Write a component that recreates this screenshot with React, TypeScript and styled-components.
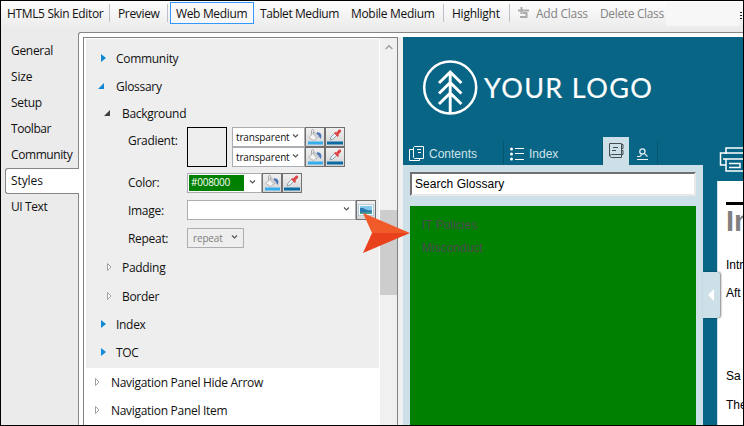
import React from 'react';
import styled, { createGlobalStyle } from 'styled-components';

const Global = createGlobalStyle`
  * { box-sizing: border-box; }
  body { margin: 0; overflow: hidden; }
  svg { display: block; flex: none; }
`;

const Frame = styled.div`
  position: relative;
  width: 744px;
  height: 426px;
  border: 1px solid #000;
  background: #ebebeb;
  overflow: hidden;
  display: flex;
  flex-direction: column;
  font-family: 'Open Sans', 'Noto Sans', sans-serif;
  font-size: 12px;
  color: #111;
  white-space: nowrap;
`;

const Toolbar = styled.div`
  height: 31px;
  flex: none;
  display: flex;
  align-items: flex-start;
  background: linear-gradient(#fdfdfd, #e9e9e9);
`;

const ToolItem = styled.div<{ $w: number; $pad?: number; $ls?: number; $active?: boolean; $disabled?: boolean }>`
  width: ${p => p.$w}px;
  height: 22px;
  margin-top: 1px;
  margin-left: ${p => (p.$active ? 2 : 0)}px;
  padding-left: ${p => p.$pad ?? 5}px;
  line-height: 21px;
  letter-spacing: ${p => p.$ls ?? -0.25}px;
  border: 1px solid ${p => (p.$active ? '#3399ff' : 'transparent')};
  background: ${p => (p.$active ? '#f8f8f8' : 'none')};
  color: ${p => (p.$disabled ? '#838383' : '#111')};
`;

const Divider = styled.div`
  width: 1px;
  height: 18px;
  margin-top: 3px;
  background: #bcc0c8;
`;

const ClassIcon = styled.div`
  width: 20px;
  padding: 6px 0 0 8px;
`;

const Cover = styled.div`
  width: 74px;
  height: 24px;
  margin-top: 1px;
  border-radius: 2px;
  background: #f7f7f7;
`;

const Overflow = styled.div`
  margin-top: 11px;
  width: 2px;
  height: 7px;
  display: flex;
  flex-direction: column;
  justify-content: space-between;
`;

const OverflowBar = styled.span`
  height: 1px;
  background: #222;
`;

const Main = styled.div`
  flex: 1;
  min-height: 0;
  display: flex;
`;

const SideTabs = styled.div`
  width: 77px;
  flex: none;
  padding: 6px 0 0 4px;
`;

const SideTab = styled.div<{ $active?: boolean; $ls?: number }>`
  height: 26px;
  width: ${p => (p.$active ? 74 : 73)}px;
  padding-left: 5px;
  line-height: 24px;
  letter-spacing: ${p => p.$ls ?? -0.25}px;
  border: 1px solid ${p => (p.$active ? '#868686' : 'transparent')};
  border-right: 0;
  border-radius: 3px 0 0 3px;
  background: ${p => (p.$active ? '#fff' : 'transparent')};
  position: relative;
`;

const Content = styled.div`
  flex: 1;
  min-width: 0;
  border-top: 1px solid #868686;
  border-left: 1px solid #868686;
  border-top-left-radius: 3px;
  background: #fff;
  padding: 4px 0 0 4px;
  display: flex;
`;

const Panel = styled.div`
  width: 315px;
  flex: none;
  border: 1px solid #7f8288;
  border-bottom: 0;
  padding-left: 2px;
  display: flex;
  background: #fff;
`;

const Tree = styled.div`
  width: 294px;
  margin-top: 1px;
`;

const GrayGroup = styled.div`
  height: 329px;
  padding-top: 5px;
  background: #eee;
`;

const Row = styled.div<{ $level: number; $h?: number; $ls?: number }>`
  height: ${p => p.$h ?? 28}px;
  padding-left: ${p => 8 + p.$level * 6}px;
  display: flex;
  align-items: center;
  letter-spacing: ${p => p.$ls ?? -0.3}px;
`;

const Marker = styled.span<{ $narrow: boolean }>`
  width: ${p => (p.$narrow ? 16 : 17)}px;
  flex: none;
  display: flex;
  padding-bottom: 1px;
`;

const Field = styled.div<{ $h?: number }>`
  height: ${p => p.$h ?? 28}px;
  padding-left: 42px;
  display: flex;
  align-items: center;
`;

const GradientField = styled(Field)`
  align-items: flex-start;
`;

const FieldLabel = styled.span<{ $top?: number }>`
  width: 59px;
  padding-top: ${p => p.$top ?? 0}px;
  letter-spacing: -0.3px;
`;

const Swatch = styled.div`
  width: 40px;
  height: 40px;
  border: 1px solid #000;
  margin-right: 5px;
`;

const Stack = styled.div`
  display: flex;
  flex-direction: column;
`;

const Line = styled.div`
  display: flex;
`;

const Combo = styled.div<{ $w: number; $disabled?: boolean }>`
  width: ${p => p.$w}px;
  height: 20px;
  border: 1px solid #abadb3;
  background: ${p => (p.$disabled ? '#eee' : '#fff')};
  color: ${p => (p.$disabled ? '#808080' : '#111')};
  font-size: 10px;
  letter-spacing: -0.15px;
  line-height: 17px;
  padding: 1px 5px 1px ${p => (p.$disabled ? 5 : 3)}px;
  display: flex;
  justify-content: space-between;
`;

const ColorValue = styled.span`
  width: 55px;
  height: 16px;
  line-height: 15px;
  margin-left: -2px;
  padding-left: 2px;
  background: #008000;
  color: #fff;
  letter-spacing: -0.25px;
`;

const IconButton = styled.div`
  width: 20px;
  height: 20px;
  border: 1px solid #707070;
  background: linear-gradient(#efefef, #d5d5d5);
  padding: 1px;
`;

const ScrollTrack = styled.div`
  width: 17px;
  background: #f0f0f0;
  margin-left: 1px;
  padding-top: 6px;
  display: flex;
  flex-direction: column;
  align-items: stretch;
`;

const ScrollUp = styled.div`
  height: 166px;
  padding-left: 5px;
`;

const ScrollThumb = styled.div`
  height: 85px;
  background: #cdcdcd;
`;

const Gutter = styled.div`
  width: 5px;
  flex: none;
  background: #f0f0f0;
`;

const Preview = styled.div`
  flex: 1;
  min-width: 0;
  background: #086585;
  display: flex;
  flex-direction: column;
  font-family: 'Liberation Sans', Arial, sans-serif;
`;

const Brand = styled.div`
  height: 99px;
  flex: none;
  padding: 22px 0 0 19px;
  display: flex;
`;

const BrandName = styled.div`
  margin-left: 6px;
  line-height: 57px;
  font-family: Lato, sans-serif;
  font-size: 27px;
  letter-spacing: 1.35px;
  color: #fff;
  -webkit-text-stroke: 0.2px #fff;
`;

const Columns = styled.div`
  flex: 1;
  min-height: 0;
  display: flex;
`;

const NavPane = styled.div`
  width: 300px;
  flex: none;
  display: flex;
  flex-direction: column;
`;

const NavTabs = styled.div`
  height: 29px;
  flex: none;
  display: flex;
  align-items: flex-end;
`;

const NavTab = styled.div<{ $w: number; $pad: number }>`
  width: ${p => p.$w}px;
  height: 24px;
  padding: 1px 0 0 ${p => p.$pad}px;
  display: flex;
  align-items: center;
  gap: 4px;
  color: #d3e3e9;
  border-right: 1px solid #07566f;
`;

const ActiveNavTab = styled.div`
  width: 26px;
  height: 28px;
  padding: 5px 0 0 6px;
  background: #cde0e7;
`;

const NavBody = styled.div`
  flex: 1;
  background: #cde0e7;
  padding: 7px 7px 0;
  display: flex;
  flex-direction: column;
`;

const Search = styled.div`
  height: 24px;
  flex: none;
  border: 2px solid #707070;
  border-right-color: #e8e8e8;
  border-bottom-color: #e8e8e8;
  background: #fff;
  padding-left: 3px;
  line-height: 20px;
  color: #000;
  letter-spacing: 0.04px;
`;

const Terms = styled.div`
  flex: 1;
  margin-top: 10px;
  padding: 8px 0 0 12px;
  background: #008000;
  color: #4d4a52;
  line-height: 23px;
`;

const Topic = styled.div`
  flex: 1;
  min-width: 0;
  padding-left: 14px;
  display: flex;
  flex-direction: column;
`;

const PrintBar = styled.div`
  height: 45px;
  flex: none;
  padding: 11px 0 0 2px;
`;

const Page = styled.div`
  flex: 1;
  background: #fff;
  border-left: 1px solid #cde0e7;
  padding: 21px 0 0 8px;
  overflow: hidden;
  color: #000;
`;

const Heading = styled.div`
  border-top: 3px solid #000;
  height: 49px;
  line-height: 33px;
  font-size: 29px;
  font-weight: bold;
  color: #808080;
`;

const Para = styled.div<{ $h: number }>`
  height: ${p => p.$h}px;
  line-height: 29px;
`;

const Handle = styled.div`
  position: absolute;
  left: 702px;
  top: 271px;
  width: 17px;
  height: 46px;
  padding: 17px 0 0 5px;
  background: #cde0e7;
  border-radius: 0 3px 3px 0;
  box-shadow: 1px 0 2px rgba(0, 0, 0, 0.5);
`;

const Pointer = styled.div`
  position: absolute;
  left: 361px;
  top: 211px;
`;

type Kind = 'blue' | 'gray' | 'blueOpen' | 'grayOpen';

const Triangle = ({ kind, narrow = true }: { kind: Kind; narrow?: boolean }) => (
  <Marker $narrow={narrow}>
    <svg width="8" height="10" viewBox="0 0 8 10" overflow="visible">
      {kind === 'blue' && <path d="M1 1L6 5L1 9Z" fill="#1088d4" />}
      {kind === 'gray' && <path d="M1.5 1.5L5 5L1.5 8.5Z" fill="#fff" stroke="#a0a0a0" />}
      {kind === 'blueOpen' && <path d="M-2 8H4V2Z" fill="#1088d4" />}
      {kind === 'grayOpen' && <path d="M-2 8H4V2Z" fill="#404040" />}
    </svg>
  </Marker>
);

const Chevron = () => (
  <svg width="7" height="14" viewBox="0 0 7 14">
    <path d="M1 5.5L3.5 8L6 5.5" fill="none" stroke="#555" strokeWidth="1.2" />
  </svg>
);

const PaintButton = () => (
  <IconButton>
    <svg width="16" height="16" viewBox="0 0 16 16">
      <path d="M10 3.2C14 3 15.5 6 13.6 10C12.4 8.5 12 6 9.5 5Z" fill="#4a76b8" />
      <path d="M1.8 8.5L7.2 3L12 7.5L6.5 11.5Z" fill="#f5f5f5" stroke="#a5a5a5" strokeWidth=".8" />
      <path d="M6.7 6V1.5C6.7 .2 4.5 .2 4.5 1.5V5.5" fill="none" stroke="#999" strokeWidth=".8" />
      <path d="M7.2 4L11 7.5L9 9L5.8 5.5Z" fill="#c7ccd0" />
      <rect x="1" y="12.5" width="15" height="3" fill="#35acec" />
    </svg>
  </IconButton>
);

const PickerButton = () => (
  <IconButton>
    <svg width="16" height="16" viewBox="0 0 16 16">
      <path d="M3 11L4 8L8 4L10 6L6 10Z" fill="#e7f4fa" stroke="#8b9ba5" strokeWidth=".9" />
      <path d="M7 4.2L8.2 3L9.4 3.5L11.5 1.1C12.8 -.3 15.1 1.5 13.8 3L11.4 5.5L12 6.8L10.8 8Z" fill="#db4545" />
      <rect x="0" y="12.5" width="16" height="3" fill="#0a6ca4" />
    </svg>
  </IconButton>
);

const ImageButton = () => (
  <IconButton>
    <svg width="16" height="16" viewBox="0 0 16 16">
      <rect x=".5" y="2.5" width="15" height="11" fill="#f7fbfd" stroke="#b5cad6" />
      <rect x="2" y="4" width="12" height="8" fill="#83c7eb" />
      <path d="M2 6L5 6L9 8L14 8.5V12H2Z" fill="#287ab0" />
      <path d="M2 10.5L14 10V12H2Z" fill="#4e9d8a" />
    </svg>
  </IconButton>
);

const TreeLogo = () => (
  <svg width="56" height="58" viewBox="0 0 56 58" fill="none" stroke="#fff" strokeWidth="2.5">
    <circle cx="28.2" cy="28.5" r="26" />
    <path d="M28.2 13V54M17 24L28.2 13L39.4 24M17 34.5L28.2 23.5L39.4 34.5M17 45L28.2 34L39.4 45" strokeWidth="2.9" />
  </svg>
);

const ContentsIcon = () => (
  <svg width="16" height="16" viewBox="0 0 16 16" fill="none" stroke="#fff">
    <path d="M5.5 .5H14.5V12.5H5.5L4.5 11.5V1.5ZM4.5 3.5H.5V14.5H10.5V12.5M8 3.5H12M9 6.5H12" />
  </svg>
);

const ListIcon = () => (
  <svg width="15" height="14" viewBox="0 0 15 14" fill="#fff">
    <circle cx="1.5" cy="2" r="1.5" />
    <circle cx="1.5" cy="7" r="1.5" />
    <circle cx="1.5" cy="12" r="1.5" />
    <path d="M5 1H14V2H5ZM5 6H14V7H5ZM5 12H14V13H5Z" />
  </svg>
);

const BookIcon = () => (
  <svg width="15" height="16" viewBox="0 0 15 16" fill="none" stroke="#444c50">
    <path d="M.5 1.5H12.5V15.5H2.5C.5 15.5 .5 12.5 2.5 12.5H12.5M.5 1.5V14M4 5.5H9M3 8.5H7M12.5 2.5H14V6.5H12.5M12.5 8.5H14V12.5H12.5" />
  </svg>
);

const SearchIcon = () => (
  <svg width="12" height="12" viewBox="0 0 12 12" fill="none" stroke="#e7f1f4">
    <circle cx="5.4" cy="3.4" r="2.6" strokeWidth="1.3" />
    <path d="M7.3 5.3L10.5 8.5M0 8.5H3L4.7 6.7M0 11.5H11" strokeWidth="1.1" />
  </svg>
);

const Printer = () => (
  <svg width="28" height="26" viewBox="0 0 28 26" fill="none" stroke="#fff" strokeWidth="1.5">
    <path d="M7 7V1H26M7 6H28M7 18H1.5V6H7M4 12H28M7 12V24H28M10 16.5H21V20.5H10" />
  </svg>
);

const sideTabs: [string, number][] = [
  ['General', -0.3],
  ['Size', -0.2],
  ['Setup', -0.3],
  ['Toolbar', -0.42],
  ['Community', -0.42],
  ['Styles', -0.1],
  ['UI Text', -0.4],
];

export default function App() {
  return (
    <>
      <Global />
      <Frame>
        <Toolbar>
          <ToolItem $w={108} $ls={-0.35}>HTML5 Skin Editor</ToolItem>
          <Divider />
          <ToolItem $w={57} $pad={7} $ls={-0.35}>Preview</ToolItem>
          <Divider />
          <ToolItem $w={84} $pad={5} $ls={-0.35} $active>Web Medium</ToolItem>
          <ToolItem $w={91} $ls={-0.4}>Tablet Medium</ToolItem>
          <ToolItem $w={98} $ls={-0.32}>Mobile Medium</ToolItem>
          <Divider />
          <ToolItem $w={65} $pad={7}>Highlight</ToolItem>
          <Divider />
          <ClassIcon>
            <svg width="12" height="12" viewBox="0 0 12 12" fill="none" stroke="#aaa" strokeWidth="2">
              <path d="M3.5 0V7M0 3.5H7M6 3.5H11M5 6H8.5V10H2" />
            </svg>
          </ClassIcon>
          <ToolItem $w={64} $disabled>Add Class</ToolItem>
          <ToolItem $w={72} $ls={-0.35} $disabled>Delete Class</ToolItem>
          <Cover />
          <Overflow><OverflowBar /><OverflowBar /><OverflowBar /></Overflow>
        </Toolbar>
        <Main>
          <SideTabs>
            {sideTabs.map(([name, ls]) => (
              <SideTab key={name} $active={name === 'Styles'} $ls={ls}>{name}</SideTab>
            ))}
          </SideTabs>
          <Content>
            <Panel>
              <Tree>
                <GrayGroup>
                  <Row $level={1}><Triangle kind="blue" />Community</Row>
                  <Row $level={1}><Triangle kind="blueOpen" />Glossary</Row>
                  <Row $level={2} $h={27}><Triangle kind="grayOpen" />Background</Row>
                  <GradientField $h={42}>
                    <FieldLabel $top={5}>Gradient:</FieldLabel>
                    <Swatch />
                    <Stack>
                      {[0, 1].map(i => (
                        <Line key={i}>
                          <Combo $w={73}>transparent<Chevron /></Combo>
                          <PaintButton />
                          <PickerButton />
                        </Line>
                      ))}
                    </Stack>
                  </GradientField>
                  <Field $h={27}>
                    <FieldLabel>Color:</FieldLabel>
                    <Combo $w={75}><ColorValue>#008000</ColorValue><Chevron /></Combo>
                    <PaintButton />
                    <PickerButton />
                  </Field>
                  <Field>
                    <FieldLabel>Image:</FieldLabel>
                    <Combo $w={169}><span /><Chevron /></Combo>
                    <ImageButton />
                  </Field>
                  <Field>
                    <FieldLabel>Repeat:</FieldLabel>
                    <Combo $w={57} $disabled>repeat<Chevron /></Combo>
                  </Field>
                  <Row $level={2} $h={30}><Triangle kind="gray" />Padding</Row>
                  <Row $level={2}><Triangle kind="gray" />Border</Row>
                  <Row $level={1} $h={29}><Triangle kind="blue" />Index</Row>
                  <Row $level={1} $h={27}><Triangle kind="blue" />TOC</Row>
                </GrayGroup>
                <Row $level={0}><Triangle kind="gray" narrow={false} />Navigation Panel Hide Arrow</Row>
                <Row $level={0}><Triangle kind="gray" narrow={false} />Navigation Panel Item</Row>
              </Tree>
              <ScrollTrack>
                <ScrollUp>
                  <svg width="8" height="6" viewBox="0 0 8 6">
                    <path d="M.7 5L4 1.7L7.3 5" fill="none" stroke="#a0a0a0" strokeWidth="1.5" />
                  </svg>
                </ScrollUp>
                <ScrollThumb />
              </ScrollTrack>
            </Panel>
            <Gutter />
            <Preview>
              <Brand>
                <TreeLogo />
                <BrandName>YOUR LOGO</BrandName>
              </Brand>
              <Columns>
                <NavPane>
                  <NavTabs>
                    <NavTab $w={101} $pad={6}><ContentsIcon />Contents</NavTab>
                    <NavTab $w={99} $pad={6}><ListIcon />Index</NavTab>
                    <ActiveNavTab><BookIcon /></ActiveNavTab>
                    <NavTab $w={29} $pad={8}><SearchIcon /></NavTab>
                  </NavTabs>
                  <NavBody>
                    <Search>Search Glossary</Search>
                    <Terms>
                      <div>IT Policies</div>
                      <div>Misconduct</div>
                    </Terms>
                  </NavBody>
                </NavPane>
                <Topic>
                  <PrintBar><Printer /></PrintBar>
                  <Page>
                    <Heading>In</Heading>
                    <Para $h={28}>Intr</Para>
                    <Para $h={83}>Aft</Para>
                    <Para $h={29}>Sa</Para>
                    <Para $h={28}>The</Para>
                  </Page>
                </Topic>
              </Columns>
            </Preview>
          </Content>
        </Main>
        <Handle>
          <svg width="6" height="12" viewBox="0 0 6 12"><path d="M6 0V12L0 6Z" fill="#fff" /></svg>
        </Handle>
        <Pointer>
          <svg width="49" height="42" viewBox="0 0 49 42">
            <path d="M1 1L48 21H10Z" fill="#f15a29" />
            <path d="M1 41L48 21H10Z" fill="#e8411b" />
          </svg>
        </Pointer>
      </Frame>
    </>
  );
}
